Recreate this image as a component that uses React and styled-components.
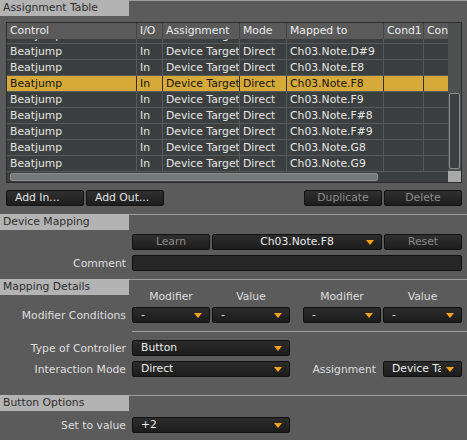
import React from 'react';
import styled, { createGlobalStyle } from 'styled-components';

const GlobalStyle = createGlobalStyle`
  html, body {
    margin: 0;
    padding: 0;
    background: #5b5b5b;
  }
  * {
    box-sizing: border-box;
  }
`;

const Page = styled.div`
  width: 467px;
  height: 440px;
  overflow: hidden;
  background: #5b5b5b;
  font-family: 'DejaVu Sans', 'Liberation Sans', sans-serif;
  font-size: 10.8px;
  color: #e2e2e2;
  display: flex;
  flex-direction: column;
`;

const SectionHeader = styled.div`
  display: flex;
  height: 16px;
  margin-top: ${(p) => p.$top || 0}px;
`;

const SectionLabel = styled.div`
  width: 129px;
  background: #b3b3b3;
  color: #2e2e2e;
  padding-left: 3px;
  line-height: 16px;
  white-space: nowrap;
`;

const SectionRule = styled.div`
  flex: 1;
  border-top: 1px solid #9d9d9d;
`;

const Table = styled.div`
  margin: 6px 0 0 6px;
  width: 456px;
  height: 161px;
  border: 1px solid #2b2d2d;
  display: grid;
  grid-template-columns: 1fr 13px;
  grid-template-rows: 1fr 11px;
  background: #3c3f3f;
`;

const TableMain = styled.div`
  display: flex;
  flex-direction: column;
  overflow: hidden;
`;

const COLS = '130px 26px 77px 47px 97px 40px 25px';

const HeaderRow = styled.div`
  display: grid;
  grid-template-columns: ${COLS};
  height: 16px;
  background: #5a5a5a;
  flex-shrink: 0;
  position: relative;
  z-index: 1;
`;

const HeaderCell = styled.div`
  padding-left: 3px;
  line-height: 16px;
  color: #ececec;
  border-right: 1px solid #444646;
  white-space: nowrap;
  overflow: hidden;
`;

const Body = styled.div`
  flex: 1;
  overflow: hidden;
`;

const BodyInner = styled.div`
  margin-top: -11px;
`;

const Row = styled.div`
  display: grid;
  grid-template-columns: ${COLS};
  height: 16px;
  background: ${(p) => (p.$selected ? '#d6a939' : '#3c3f3f')};
  color: ${(p) => (p.$selected ? '#151515' : '#e6e6e6')};
  border-bottom: 1px solid #575a5a;
`;

const Cell = styled.div`
  padding-left: 3px;
  line-height: 15px;
  border-right: 1px solid ${(p) => (p.$selected ? '#2e3030' : '#575a5a')};
  white-space: nowrap;
  overflow: hidden;
`;

const VScroll = styled.div`
  grid-row: 1;
  grid-column: 2;
  background: #4f5151;
  display: flex;
  flex-direction: column;
  padding: 70px 1px 2px 1px;
`;

const VThumb = styled.div`
  flex: 1;
  border: 1px solid #8a8d8d;
  border-radius: 2px;
  background: #3c3f3f;
`;

const HScroll = styled.div`
  grid-row: 2;
  grid-column: 1;
  background: #3c3f3f;
  border-top: 1px solid #575a5a;
  padding: 1px 70px 1px 3px;
  display: flex;
`;

const HThumb = styled.div`
  flex: 1;
  border: 1px solid #8a8d8d;
  border-radius: 2px;
  background: #767979;
`;

const Corner = styled.div`
  grid-row: 2;
  grid-column: 2;
  background: #a9a9a9;
`;

const ButtonRow = styled.div`
  display: flex;
  gap: 2px;
  margin: 7px 5px 0 6px;
`;

const Spacer = styled.div`
  flex: 1;
`;

const Button = styled.div`
  width: ${(p) => p.$w || 78}px;
  height: 16px;
  border: 1px solid #121212;
  border-radius: 2px;
  background: linear-gradient(#303030, #1d1d1d);
  color: ${(p) => (p.$disabled ? '#8b8b8b' : '#e4e4e4')};
  line-height: 14px;
  text-align: ${(p) => (p.$left ? 'left' : 'center')};
  padding-left: ${(p) => (p.$left ? 8 : 0)}px;
  white-space: nowrap;
  overflow: hidden;
`;

const FormRow = styled.div`
  display: flex;
  align-items: center;
  height: 16px;
  margin-top: ${(p) => p.$top || 0}px;
`;

const Label = styled.div`
  width: ${(p) => p.$w || 126}px;
  text-align: right;
  margin-right: ${(p) => (p.$gap === undefined ? 6 : p.$gap)}px;
  color: #dedede;
  white-space: nowrap;
`;

const Controls = styled.div`
  display: flex;
  gap: 2px;
  margin-left: ${(p) => p.$ml || 0}px;
`;

const Select = styled.div`
  position: relative;
  display: flex;
  justify-content: ${(p) => (p.$center ? 'center' : 'flex-start')};
  width: ${(p) => p.$w || 78}px;
  height: 16px;
  border: 1px solid #101010;
  border-radius: 2px;
  background: linear-gradient(#2c2c2c, #1c1c1c);
  color: #ececec;
  line-height: 14px;
  padding: 0 20px 0 ${(p) => (p.$center ? 20 : 8)}px;
`;

const SelectText = styled.span`
  white-space: nowrap;
  overflow: hidden;
`;

const Arrow = styled.span`
  position: absolute;
  right: 7px;
  top: 5px;
  width: 0;
  height: 0;
  border-left: 4px solid transparent;
  border-right: 4px solid transparent;
  border-top: 5px solid #f5a313;
`;

const Input = styled.div`
  width: 330px;
  height: 16px;
  border: 1px solid #101010;
  border-radius: 2px;
  background: #262626;
`;

const ColHeads = styled.div`
  display: flex;
  height: 10px;
  line-height: 10px;
  margin: -3px 0 0 132px;
  gap: 2px;
`;

const ColHead = styled.div`
  width: ${(p) => p.$w || 78}px;
  margin-left: ${(p) => p.$ml || 0}px;
  text-align: center;
  color: #dedede;
`;

const SubRule = styled.div`
  margin: ${(p) => p.$top}px 0 0 132px;
  border-top: 1px solid #9d9d9d;
`;

const rows = [
  ['Beatjump', 'In', 'Device Target', 'Direct', 'Ch03.Note.D#8'],
  ['Beatjump', 'In', 'Device Target', 'Direct', 'Ch03.Note.D#9'],
  ['Beatjump', 'In', 'Device Target', 'Direct', 'Ch03.Note.E8'],
  ['Beatjump', 'In', 'Device Target', 'Direct', 'Ch03.Note.F8', true],
  ['Beatjump', 'In', 'Device Target', 'Direct', 'Ch03.Note.F9'],
  ['Beatjump', 'In', 'Device Target', 'Direct', 'Ch03.Note.F#8'],
  ['Beatjump', 'In', 'Device Target', 'Direct', 'Ch03.Note.F#9'],
  ['Beatjump', 'In', 'Device Target', 'Direct', 'Ch03.Note.G8'],
  ['Beatjump', 'In', 'Device Target', 'Direct', 'Ch03.Note.G9'],
  ['Beatjump', 'In', 'Device Target', 'Direct', 'Ch03.Note.G#8'],
];

const headers = ['Control', 'I/O', 'Assignment', 'Mode', 'Mapped to', 'Cond1', 'Cond2'];

const Section = ({ title, top }) => (
  <SectionHeader $top={top}>
    <SectionLabel>{title}</SectionLabel>
    <SectionRule />
  </SectionHeader>
);

const Dropdown = ({ value, w, center }) => (
  <Select $w={w} $center={center}>
    <SelectText>{value}</SelectText>
    <Arrow />
  </Select>
);

const App = () => (
  <Page>
    <GlobalStyle />
    <Section title="Assignment Table" />
    <Table>
      <TableMain>
        <HeaderRow>
          {headers.map((h) => (
            <HeaderCell key={h}>{h}</HeaderCell>
          ))}
        </HeaderRow>
        <Body>
          <BodyInner>
            {rows.map((r, i) => (
              <Row key={i} $selected={r[5]}>
                {r.slice(0, 5).map((c, j) => (
                  <Cell key={j} $selected={r[5]}>{c}</Cell>
                ))}
                <Cell $selected={r[5]} />
                <Cell $selected={r[5]} />
              </Row>
            ))}
          </BodyInner>
        </Body>
      </TableMain>
      <VScroll>
        <VThumb />
      </VScroll>
      <HScroll>
        <HThumb />
      </HScroll>
      <Corner />
    </Table>
    <ButtonRow>
      <Button $left>Add In...</Button>
      <Button $left>Add Out...</Button>
      <Spacer />
      <Button $disabled>Duplicate</Button>
      <Button $disabled>Delete</Button>
    </ButtonRow>

    <Section title="Device Mapping" top={8} />
    <FormRow $top={4}>
      <Label />
      <Controls>
        <Button $disabled>Learn</Button>
        <Dropdown value="Ch03.Note.F8" w={170} center />
        <Button $disabled>Reset</Button>
      </Controls>
    </FormRow>
    <FormRow $top={5}>
      <Label>Comment</Label>
      <Input />
    </FormRow>

    <Section title="Mapping Details" top={8} />
    <ColHeads>
      <ColHead>Modifier</ColHead>
      <ColHead>Value</ColHead>
      <ColHead $ml={11}>Modifier</ColHead>
      <ColHead $w={79}>Value</ColHead>
    </ColHeads>
    <FormRow $top={5}>
      <Label>Modifier Conditions</Label>
      <Controls>
        <Dropdown value="-" />
        <Dropdown value="-" />
      </Controls>
      <Controls $ml={13}>
        <Dropdown value="-" />
        <Dropdown value="-" w={79} />
      </Controls>
    </FormRow>
    <SubRule $top={8} />
    <FormRow $top={8}>
      <Label>Type of Controller</Label>
      <Dropdown value="Button" w={158} />
    </FormRow>
    <FormRow $top={5}>
      <Label>Interaction Mode</Label>
      <Dropdown value="Direct" w={158} />
      <Label $w={86} $gap={7}>Assignment</Label>
      <Dropdown value="Device Target" w={79} />
    </FormRow>

    <Section title="Button Options" top={18} />
    <FormRow $top={6}>
      <Label>Set to value</Label>
      <Dropdown value="+2" w={158} />
    </FormRow>
  </Page>
);

export default App;
